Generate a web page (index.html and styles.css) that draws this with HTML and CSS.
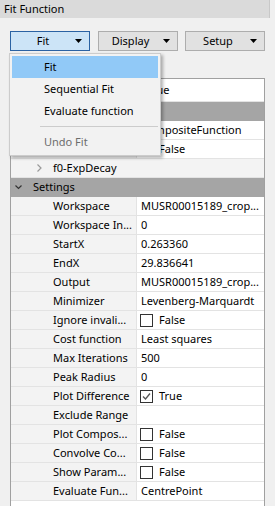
FILE: index.html
```html
<!DOCTYPE html>
<html>
<head>
<meta charset="utf-8">
<link rel="stylesheet" href="styles.css">
</head>
<body>
<div class="title">Fit Function</div>
<div class="toolbar">
  <button class="btn btn-active"><span class="lbl">Fit</span><svg class="caret" width="7" height="4" viewBox="0 0 7 4"><path d="M0 0H7L3.5 4Z"/></svg></button>
  <button class="btn"><span class="lbl">Display</span><svg class="caret" width="7" height="4" viewBox="0 0 7 4"><path d="M0 0H7L3.5 4Z"/></svg></button>
  <button class="btn"><span class="lbl">Setup</span><svg class="caret" width="7" height="4" viewBox="0 0 7 4"><path d="M0 0H7L3.5 4Z"/></svg></button>
</div>
<div class="tree">
  <div class="row header"><div class="name">Property</div><div class="val">Value</div></div>
  <div class="row group"><svg class="chev" width="7" height="5" viewBox="0 0 7 5"><path d="M0.5 0.5L3.5 3.5L6.5 0.5"/></svg>Functions</div>
  <div class="row"><div class="name">Function</div><div class="val">CompositeFunction</div></div>
  <div class="row"><div class="name">NumDeriv</div><div class="val"><span class="box"></span>False</div></div>
  <div class="row sub"><svg class="chev-r" width="5" height="8" viewBox="0 0 5 8"><path d="M0.5 0.5L4 4L0.5 7.5"/></svg>f0-ExpDecay</div>
  <div class="row group"><svg class="chev" width="7" height="5" viewBox="0 0 7 5"><path d="M0.5 0.5L3.5 3.5L6.5 0.5"/></svg>Settings</div>
  <div class="row"><div class="name">Workspace</div><div class="val">MUSR00015189_crop...</div></div>
  <div class="row"><div class="name">Workspace In...</div><div class="val">0</div></div>
  <div class="row"><div class="name">StartX</div><div class="val">0.263360</div></div>
  <div class="row"><div class="name">EndX</div><div class="val">29.836641</div></div>
  <div class="row"><div class="name">Output</div><div class="val">MUSR00015189_crop...</div></div>
  <div class="row"><div class="name">Minimizer</div><div class="val">Levenberg-Marquardt</div></div>
  <div class="row"><div class="name">Ignore invali...</div><div class="val"><span class="box"></span>False</div></div>
  <div class="row"><div class="name">Cost function</div><div class="val">Least squares</div></div>
  <div class="row"><div class="name">Max Iterations</div><div class="val">500</div></div>
  <div class="row"><div class="name">Peak Radius</div><div class="val">0</div></div>
  <div class="row"><div class="name">Plot Difference</div><div class="val"><span class="box"><svg width="11" height="11" viewBox="0 0 11 11"><path d="M2 5.5L4.5 8L9 2.5"/></svg></span>True</div></div>
  <div class="row"><div class="name">Exclude Range</div><div class="val"></div></div>
  <div class="row"><div class="name">Plot Compos...</div><div class="val"><span class="box"></span>False</div></div>
  <div class="row"><div class="name">Convolve Co...</div><div class="val"><span class="box"></span>False</div></div>
  <div class="row"><div class="name">Show Param...</div><div class="val"><span class="box"></span>False</div></div>
  <div class="row"><div class="name">Evaluate Fun...</div><div class="val">CentrePoint</div></div>
</div>
<div class="menu">
  <div class="item hl">Fit</div>
  <div class="item">Sequential Fit</div>
  <div class="item">Evaluate function</div>
  <div class="sep"></div>
  <div class="item dis">Undo Fit</div>
</div>
</body>
</html>
```

FILE: styles.css
```css
html, body {
  margin: 0;
  padding: 0;
}
body {
  width: 275px;
  height: 506px;
  overflow: hidden;
  position: relative;
  background: #f0f0f0;
  font-family: "Noto Sans", sans-serif;
  font-size: 11px;
  color: #000;
}
.title {
  box-sizing: border-box;
  width: 270px;
  height: 18px;
  line-height: 18px;
  padding-left: 4px;
  background: #dadada;
  border-right: 1px solid #c8c8c8;
}
.toolbar {
  display: flex;
  justify-content: space-between;
  width: 255px;
  margin: 13px 0 0 10px;
}
.btn {
  box-sizing: border-box;
  width: 80px;
  height: 20px;
  display: flex;
  align-items: center;
  padding: 0 7px 0 0;
  margin: 0;
  border: 1px solid #adadad;
  background: #e1e1e1;
  font: inherit;
  color: #000;
}
.btn-active {
  background: #cce4f7;
  border-color: #2a62a3;
}
.lbl {
  flex: 1;
  text-align: center;
  line-height: 18px;
}
.caret {
  display: block;
  fill: #000;
}
.tree {
  box-sizing: border-box;
  width: 255px;
  height: 440px;
  margin: 27px 0 0 10px;
  border: 1px solid #a0a0a0;
  background: #fff;
}
.row {
  display: flex;
  height: 18px;
  line-height: 18px;
  border-bottom: 1px solid #e3e3e3;
  white-space: nowrap;
}
.row .name {
  box-sizing: border-box;
  width: 126px;
  padding-left: 42px;
  border-right: 1px solid #e3e3e3;
  background: #f3f3f3;
  overflow: hidden;
}
.row .val {
  flex: 1;
  padding-left: 4px;
  display: flex;
  align-items: center;
  overflow: hidden;
}
.row.header {
  height: 22px;
  line-height: 22px;
}
.row.header .name {
  padding-left: 4px;
  background: #fff;
}
.row.group {
  align-items: center;
  background: #a5a5a5;
  border-bottom-color: #a5a5a5;
  padding-left: 4px;
}
.chev {
  fill: none;
  stroke: #333;
  stroke-width: 1.2;
  margin-right: 11px;
}
.row.sub {
  align-items: center;
  background: #f3f3f3;
  padding-left: 26px;
}
.chev-r {
  fill: none;
  stroke: #9a9a9a;
  stroke-width: 1.2;
  margin-right: 11px;
}
.box {
  box-sizing: border-box;
  width: 13px;
  height: 13px;
  margin-left: -1px;
  margin-right: 6px;
  border: 1px solid #333;
  background: #fff;
  display: flex;
  align-items: center;
  justify-content: center;
}
.box svg {
  fill: none;
  stroke: #555;
  stroke-width: 1.3;
}
.menu {
  position: absolute;
  left: 9px;
  top: 53px;
  box-sizing: border-box;
  width: 152px;
  padding: 2px;
  border: 1px solid #cccccc;
  background: #f2f2f2;
  box-shadow: 2px 2px 3px rgba(0, 0, 0, 0.3);
}
.item {
  height: 22px;
  line-height: 22px;
  padding-left: 32px;
}
.item.hl {
  background: #91c9f7;
}
.item.dis {
  color: #6d6d6d;
}
.sep {
  height: 0;
  margin: 4px 0 4px 28px;
  border-top: 1px solid #cccccc;
}
```
